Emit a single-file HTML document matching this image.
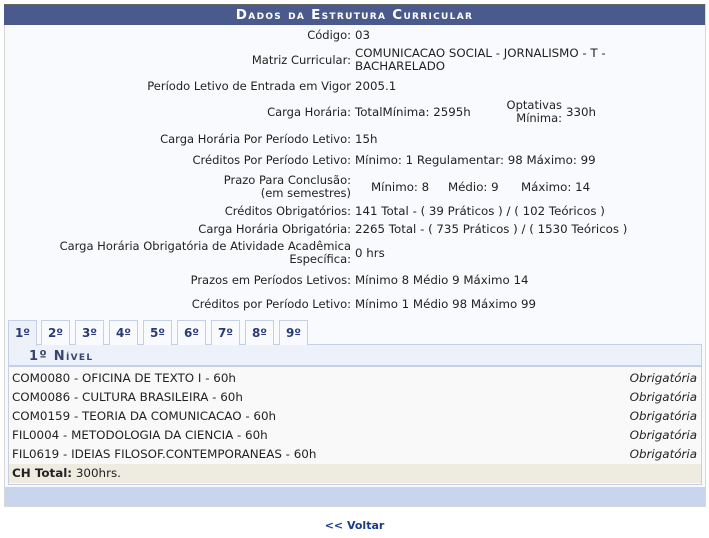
<!DOCTYPE html>
<html><head><meta charset="utf-8"><style>
body{margin:0;width:709px;height:538px;background:#fff;font-family:"DejaVu Sans",Verdana,sans-serif;font-size:11px;color:#222;position:relative;overflow:hidden}
.box{position:absolute;left:4px;top:4px;width:700px;height:502px;background:#f9fafd;border:1px solid #d8d8d8;border-top:none}
.hd{position:absolute;left:4px;top:4px;width:701px;height:20px;background:#4b5a8d;border-top:1px solid #666;color:#fff;font-weight:bold;font-size:13.5px;text-align:center;line-height:20px;font-variant:small-caps;letter-spacing:1.3px}
.l{position:absolute;right:358px;text-align:right;font-size:11.5px;line-height:13px;white-space:nowrap}
.v{position:absolute;left:355px;font-size:11.8px;line-height:13px;white-space:nowrap}
.tab{position:absolute;top:320px;height:24px;width:27px;border:1px solid #c5d0e6;border-bottom:none;background:#f9fafd;color:#2a3b7a;font-weight:bold;font-size:12px;text-align:center;line-height:24px}
.panel{position:absolute;left:8px;top:344px;width:692px;height:139px;border:1px solid #c5d0e6;background:#f9f9f9}
.ph{position:absolute;left:0;top:0;width:692px;height:22px;background:#edf1f9;border-bottom:2px solid #c5d0e6;color:#3a4470;font-weight:bold;font-variant:small-caps;letter-spacing:1.3px;font-size:13px;line-height:24px;box-sizing:border-box;padding-left:20px}
.r{position:absolute;left:3px;width:685px;height:19px;line-height:19px;font-size:11.9px}
.r i{position:absolute;right:0;top:0}
.bar{position:absolute;left:5px;top:487px;width:700px;height:19px;background:#c9d5ec}
</style></head><body>
<div class="box"></div>
<div class="hd">Dados da Estrutura Curricular</div>
<div class="l" style="top:29px">Código:</div><div class="v" style="top:29px">03</div>
<div class="l" style="top:54px">Matriz Curricular:</div><div class="v" style="top:47px">COMUNICACAO SOCIAL - JORNALISMO - T -<br>BACHARELADO</div>
<div class="l" style="top:80px">Período Letivo de Entrada em Vigor</div><div class="v" style="top:80px">2005.1</div>
<div class="l" style="top:106px">Carga Horária:</div><div class="v" style="top:106px">TotalMínima: 2595h</div>
<div class="l" style="top:99px;right:147px">Optativas<br>Mínima:</div><div class="v" style="top:106px;left:566px">330h</div>
<div class="l" style="top:133px">Carga Horária Por Período Letivo:</div><div class="v" style="top:133px">15h</div>
<div class="l" style="top:154px">Créditos Por Período Letivo:</div><div class="v" style="top:154px">Mínimo: 1&nbsp;Regulamentar: 98&nbsp;Máximo: 99</div>
<div class="l" style="top:174px">Prazo Para Conclusão:<br>(em semestres)</div>
<div class="v" style="top:181px;left:371px">Mínimo: 8</div><div class="v" style="top:181px;left:448px">Médio: 9</div><div class="v" style="top:181px;left:521px">Máximo: 14</div>
<div class="l" style="top:205px">Créditos Obrigatórios:</div><div class="v" style="top:205px">141 Total - ( 39 Práticos ) / ( 102 Teóricos )</div>
<div class="l" style="top:223px">Carga Horária Obrigatória:</div><div class="v" style="top:223px">2265 Total - ( 735 Práticos ) / ( 1530 Teóricos )</div>
<div class="l" style="top:240px">Carga Horária Obrigatória de Atividade Acadêmica<br>Específica:</div><div class="v" style="top:247px">0 hrs</div>
<div class="l" style="top:274px">Prazos em Períodos Letivos:</div><div class="v" style="top:274px">Mínimo 8 Médio 9 Máximo 14</div>
<div class="l" style="top:298px">Créditos por Período Letivo:</div><div class="v" style="top:298px">Mínimo 1 Médio 98 Máximo 99</div>
<div class="panel">
<div class="ph">1º Nível</div>
<div class="r" style="top:24px">COM0080 - OFICINA DE TEXTO I - 60h<i>Obrigatória</i></div>
<div class="r" style="top:43px">COM0086 - CULTURA BRASILEIRA - 60h<i>Obrigatória</i></div>
<div class="r" style="top:62px">COM0159 - TEORIA DA COMUNICACAO - 60h<i>Obrigatória</i></div>
<div class="r" style="top:81px">FIL0004 - METODOLOGIA DA CIENCIA - 60h<i>Obrigatória</i></div>
<div class="r" style="top:100px">FIL0619 - IDEIAS FILOSOF.CONTEMPORANEAS - 60h<i>Obrigatória</i></div>
<div style="position:absolute;left:0;top:119px;width:692px;height:19px;background:#eeebe0;line-height:19px;padding-left:3px;box-sizing:border-box;font-size:11.9px"><b>CH Total:</b> 300hrs.</div>
</div>
<div class="tab" style="left:8px;background:#edf1f9;height:25px">1º</div>
<div class="tab" style="left:41px">2º</div>
<div class="tab" style="left:75px">3º</div>
<div class="tab" style="left:109px">4º</div>
<div class="tab" style="left:143px">5º</div>
<div class="tab" style="left:177px">6º</div>
<div class="tab" style="left:211px">7º</div>
<div class="tab" style="left:245px">8º</div>
<div class="tab" style="left:279px">9º</div>
<div class="bar"></div>
<div style="position:absolute;left:0;width:709px;top:519px;text-align:center;font-weight:bold;color:#1a3a8a;font-size:11px">&lt;&lt; Voltar</div>
</body></html>
